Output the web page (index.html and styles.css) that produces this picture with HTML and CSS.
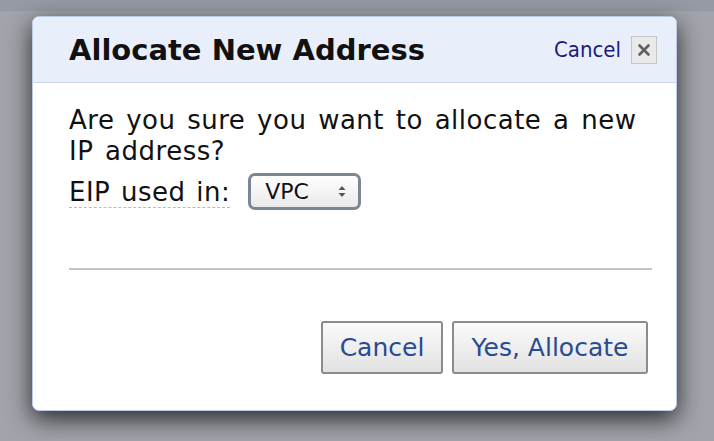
FILE: index.html
```html
<!DOCTYPE html>
<html lang="en">
<head>
    <meta charset="UTF-8">
    <meta name="viewport" content="width=device-width, initial-scale=1.0">
    <title>Allocate New Address</title>
    <link rel="stylesheet" href="styles.css">
</head>
<body>

<div class="topStrip"></div>

<!-- Allocate dialog -->
<div class="dialog">
    <div class="dialogHeader">
        <h2>Allocate New Address</h2>
        <a href="#" class="headerCancel">Cancel</a>
        <span class="closeBox">
            <svg width="14" height="14" viewBox="0 0 14 14">
                <path d="M2.5 2.5 L11.5 11.5 M11.5 2.5 L2.5 11.5" stroke="#5f5f5f" stroke-width="2.6" stroke-linecap="round"/>
            </svg>
        </span>
    </div>

    <div class="dialogBody">
        <p class="question">Are you sure you want to allocate a new IP address?</p>
        <div class="eipRow">
            <label for="eipDomain" class="hint">EIP used in:</label>
            <div class="selectBox">
                <span>VPC</span>
                <svg width="8" height="13" viewBox="0 0 8 13">
                    <path d="M4 1 L7.5 5 L0.5 5 Z M4 12 L7.5 8 L0.5 8 Z" fill="#555"/>
                </svg>
            </div>
        </div>

        <hr class="divider">

        <div class="actions">
            <button type="button" class="btn btnCancel">Cancel</button>
            <button type="button" class="btn btnAllocate">Yes, Allocate</button>
        </div>
    </div>
</div>

</body>
</html>
```
FILE: styles.css
```css
body {
    font-family: "DejaVu Sans", Verdana, sans-serif;
    margin: 0;
    padding: 0;
    height: 441px;
    overflow: hidden;
    background-color: #a1a4ab;
}
.topStrip {
    height: 11px;
    background-color: #969aa4;
}
.dialog {
    margin: 5px 0 0 32px;
    width: 643px;
    height: 393px;
    background: #fff;
    border: 1px solid #b9cbe8;
    border-radius: 7px;
    box-shadow: 0 8px 24px rgba(0, 0, 0, 0.75);
    overflow: hidden;
}
.dialogHeader {
    display: flex;
    align-items: center;
    height: 65px;
    padding: 0 19px 0 36px;
    background-color: #e8effb;
    border-bottom: 1px solid #c9d7ee;
}
.dialogHeader h2 {
    flex: 1;
    margin: 0;
    font-size: 29px;
    color: #111;
}
.headerCancel {
    font-family: "DejaVu Sans Condensed", "DejaVu Sans", sans-serif;
    font-size: 22px;
    color: #1b1b7a;
    text-decoration: none;
    margin-right: 10px;
}
.closeBox {
    display: flex;
    align-items: center;
    justify-content: center;
    width: 24px;
    height: 26px;
    background: #e9e9e9;
    border: 1px solid #c6c6c6;
}
.dialogBody {
    padding: 22px 24px 0 36px;
}
.question {
    margin: 0;
    font-size: 26px;
    line-height: 31px;
    letter-spacing: 0.5px;
    word-spacing: 3px;
    color: #111;
}
.eipRow {
    display: flex;
    align-items: center;
    gap: 18px;
    margin-top: 6px;
}
.hint {
    font-size: 26px;
    line-height: 30px;
    letter-spacing: 0.5px;
    word-spacing: 2px;
    color: #111;
    border-bottom: 1px dashed #bbb;
    margin-top: 2px;
}
.selectBox {
    display: flex;
    align-items: center;
    justify-content: space-between;
    width: 81px;
    height: 31px;
    padding: 0 12px 0 14px;
    font-size: 22px;
    color: #111;
    background: linear-gradient(#fff, #e9e9e9);
    border: 3px solid #7c8593;
    border-radius: 7px;
}
.divider {
    margin: 58px 0 0 0;
    border: none;
    border-top: 2px solid #c4c4c4;
}
.actions {
    display: flex;
    justify-content: flex-end;
    gap: 9px;
    margin-top: 51px;
    padding-right: 4px;
}
.btn {
    font-family: "DejaVu Sans", Verdana, sans-serif;
    font-size: 25px;
    color: #2a4a92;
    height: 53px;
    padding: 0;
    background: linear-gradient(#fafafa, #e2e2e2);
    border: 2px solid #8c8c8c;
    border-radius: 3px;
    cursor: pointer;
}
.btnCancel {
    width: 122px;
}
.btnAllocate {
    width: 196px;
}
```
